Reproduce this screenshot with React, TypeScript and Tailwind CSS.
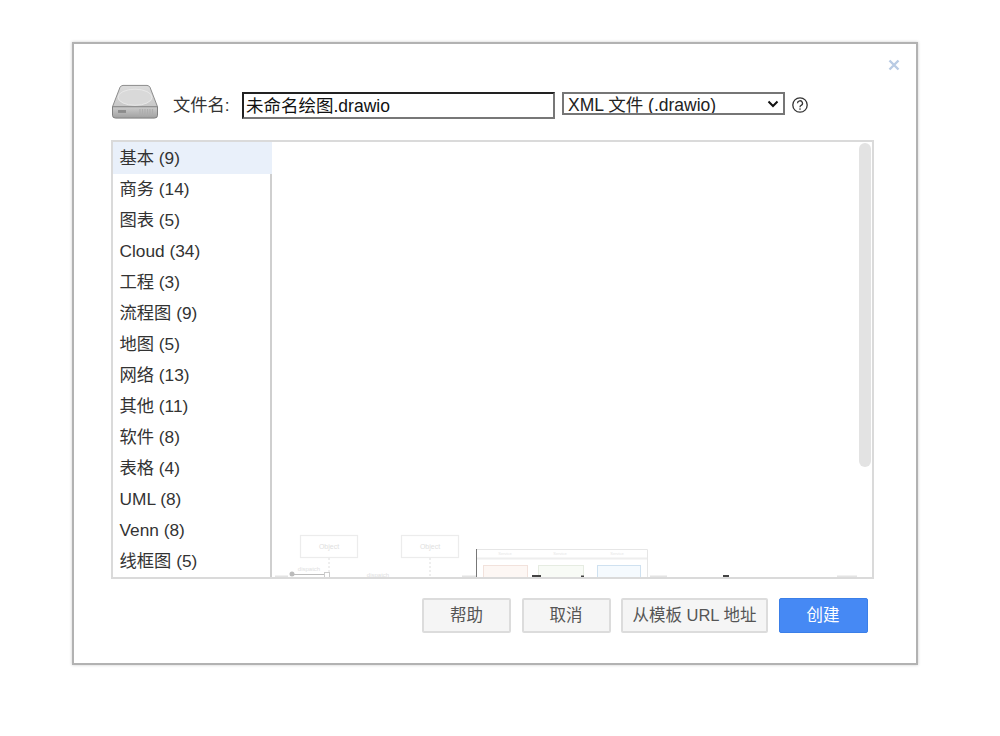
import React from "react";

const FONT = "[font-family:'Liberation_Sans','Noto_Sans_CJK_SC',sans-serif]";

const items = ["基本 (9)", "商务 (14)", "图表 (5)", "Cloud (34)", "工程 (3)", "流程图 (9)", "地图 (5)", "网络 (13)", "其他 (11)", "软件 (8)", "表格 (4)", "UML (8)", "Venn (8)", "线框图 (5)"];

function Disk() {
  return (
    <svg width="48" height="36" viewBox="0 0 48 38" preserveAspectRatio="none" className="shrink-0 self-start -mt-[2px]">
      <defs>
        <linearGradient id="top" x1="0" y1="0" x2="0" y2="1">
          <stop offset="0" stopColor="#dcdcdc" />
          <stop offset="1" stopColor="#c6c6c6" />
        </linearGradient>
        <linearGradient id="front" x1="0" y1="0" x2="0" y2="1">
          <stop offset="0" stopColor="#cccccc" />
          <stop offset="1" stopColor="#a0a0a0" />
        </linearGradient>
      </defs>
      <path d="M12 1.500 H36 Q38 1.500 39 3.500 L46.500 24 V26 H1.500 V24 L9 3.500 Q10 1.500 12 1.500Z" fill="url(#top)" stroke="#8a8a8a" />
      <ellipse cx="24" cy="14" rx="17" ry="8.500" fill="#d9d9d9" stroke="#e8e8e8" />
      <path d="M1.500 24 H46.500 V33 Q46.500 36 43.500 36 H4.500 Q1.500 36 1.500 33Z" fill="url(#front)" stroke="#7d7d7d" />
      <rect x="7" y="27.500" width="8" height="3" fill="#8b8b8b" />
      <path d="M29 26.500v7M31.500 26.500v7M34 26.500v7M36.500 26.500v7M39 26.500v7M41.500 26.500v7" stroke="#adadad" strokeWidth="1.200" />
    </svg>
  );
}

function Help() {
  return (
    <svg width="18" height="18" viewBox="0 0 18 18" className="shrink-0">
      <circle cx="9" cy="9" r="7.200" fill="none" stroke="#333" strokeWidth="1.300" />
      <path d="M6.500 7.200a2.500 2.400 0 1 1 3.700 2.100c-.8.500-1.200.9-1.200 1.900" fill="none" stroke="#333" strokeWidth="1.300" />
      <circle cx="9" cy="13.100" r=".8" fill="#333" />
    </svg>
  );
}

function Preview() {
  const small = { fontFamily: "'Liberation Sans',sans-serif" };
  return (
    <svg width="586" height="49" viewBox="0 0 586 49" className="block shrink-0">
      <g fill="none" stroke="#ececec" strokeWidth="1.200">
        <rect x="28.500" y="7.500" width="57" height="22" />
        <rect x="129.500" y="7.500" width="57" height="22" />
      </g>
      <g fill="#e0e0e0" fontSize="7" textAnchor="middle" style={small}>
        <text x="57" y="21">Object</text>
        <text x="158" y="21">Object</text>
        <text x="37" y="43" fontSize="6">dispatch</text>
        <text x="106" y="49" fontSize="6">dispatch</text>
      </g>
      <path d="M57 30v18M158 30v18" stroke="#dedede" strokeDasharray="2 2" />
      <path d="M20 46.500h32" stroke="#bdbdbd" />
      <circle cx="20" cy="46" r="2.500" fill="#bbbbbb" />
      <rect x="52.500" y="44.500" width="5" height="5" fill="#fff" stroke="#cccccc" />
      <path d="M375.500 21.500H204.500" stroke="#e6e6e6" fill="none" />
      <path d="M375.500 21.500V49" stroke="#e6e6e6" />
      <path d="M204.500 21V49" stroke="#777777" />
      <path d="M205 30.500H375" stroke="#eeeeee" strokeWidth="2" />
      <g fill="#e6e6e6" fontSize="4" textAnchor="middle" style={small}>
        <text x="233" y="27">Service</text>
        <text x="288" y="27">Service</text>
        <text x="345" y="27">Service</text>
      </g>
      <rect x="211.500" y="37.500" width="44" height="13" fill="#fdf7f4" stroke="#f2e2dc" />
      <rect x="266.500" y="37.500" width="45" height="13" fill="#f8fbf6" stroke="#e6ece2" />
      <rect x="325.500" y="37.500" width="43" height="13" fill="#f5fafe" stroke="#cfe1f0" />
      <g fill="#e4e4e4">
        <rect x="3" y="47.500" width="13" height="1.500" />
        <rect x="190" y="47.500" width="14" height="1.500" />
        <rect x="378" y="47.500" width="17" height="1.500" />
        <rect x="565" y="47.500" width="20" height="1.500" />
      </g>
      <g fill="#444444">
        <rect x="260" y="47" width="9" height="2" />
        <rect x="309" y="47.500" width="3" height="1.500" />
        <rect x="451" y="47" width="6" height="2" />
      </g>
    </svg>
  );
}

function Btn({ children, w, primary }: { children: React.ReactNode; w: string; primary?: boolean }) {
  return (
    <button
      className={`${w} h-[35px] rounded-[2px] text-[16.500px] flex items-center justify-center whitespace-nowrap ${
        primary ? "bg-[#4689f4] border border-[#3b7fe8] text-white" : "bg-[#f5f5f5] border-2 border-[#dcdcdc] text-[#555555]"
      }`}
    >
      {children}
    </button>
  );
}

export default function App() {
  return (
    <div className={`w-[1000px] h-[736px] bg-white pt-[42px] pl-[72px] overflow-hidden ${FONT}`}>
      <div className="relative w-[846px] h-[623px] bg-white border-2 border-[#b2b2b2] shadow-[0_0_3px_rgba(0,0,0,0.2)] pt-[42px] pl-[37px]">
        <div className="absolute right-[16px] top-[15px]">
          <svg width="12" height="12" viewBox="0 0 12 12" className="block">
            <path d="M1.500 1.500l9 9M10.500 1.500l-9 9" stroke="#b9cbe4" strokeWidth="2.400" />
          </svg>
        </div>

        <div className="flex items-center h-[38px]">
          <Disk />
          <span className="ml-[14px] mt-[2px] w-[63px] text-[17.300px] text-[#333333] whitespace-nowrap">文件名:</span>
          <input
            readOnly
            value="未命名绘图.drawio"
            className="ml-[6px] w-[313px] h-[27px] pl-[2px] pr-[3px] pb-[2px] bg-white text-[17.500px] text-[#111111] border-2 border-t-[#222222] border-l-[#222222] border-r-[#777777] border-b-[#777777] outline-none"
          />
          <div className="ml-[7px] -mt-[3px] w-[223px] h-[23px] border-2 border-[#767676] pl-[4px] flex items-center justify-between text-[17.500px] text-[#222222] overflow-hidden">
            <span className="whitespace-nowrap mt-[4px]">XML 文件 (.drawio)</span>
            <svg width="12" height="8" viewBox="0 0 12 8" className="mr-[4px] shrink-0">
              <path d="M1.500 1.500L6 6l4.500-4.500" fill="none" stroke="#111" strokeWidth="2" />
            </svg>
          </div>
          <span className="ml-[6px]"><Help /></span>
        </div>

        <div className="mt-[16px] w-[763px] h-[439px] border-2 border-[#dadada] flex overflow-hidden">
          <div className="w-[159px] h-full shrink-0 border-r-2 border-[#cfcfcf] bg-white">
            {items.map((t, i) => (
              <div
                key={t}
                className={`pl-[6.500px] pt-[2px] flex items-center text-[17.300px] text-[#333333] whitespace-nowrap ${i === 0 ? "h-[32px] -mb-px -mr-[2px] bg-[#e9f0fa]" : "h-[31px]"}`}
              >
                {t}
              </div>
            ))}
          </div>
          <div className="flex-1 min-w-0 flex bg-white">
            <div className="flex-1 min-w-0 flex flex-col justify-end overflow-hidden">
              <Preview />
            </div>
            <div className="w-[15px] shrink-0 pt-[1px] pr-[1px] flex justify-end">
              <div className="w-[12px] h-[324px] rounded-[6px] bg-[#e3e3e3]" />
            </div>
          </div>
        </div>

        <div className="flex mt-[19px] pl-[311px] gap-[10.500px]">
          <Btn w="w-[89px]">帮助</Btn>
          <Btn w="w-[89px]">取消</Btn>
          <Btn w="w-[147px]">从模板 URL 地址</Btn>
          <Btn w="w-[89px]" primary>创建</Btn>
        </div>
      </div>
    </div>
  );
}
